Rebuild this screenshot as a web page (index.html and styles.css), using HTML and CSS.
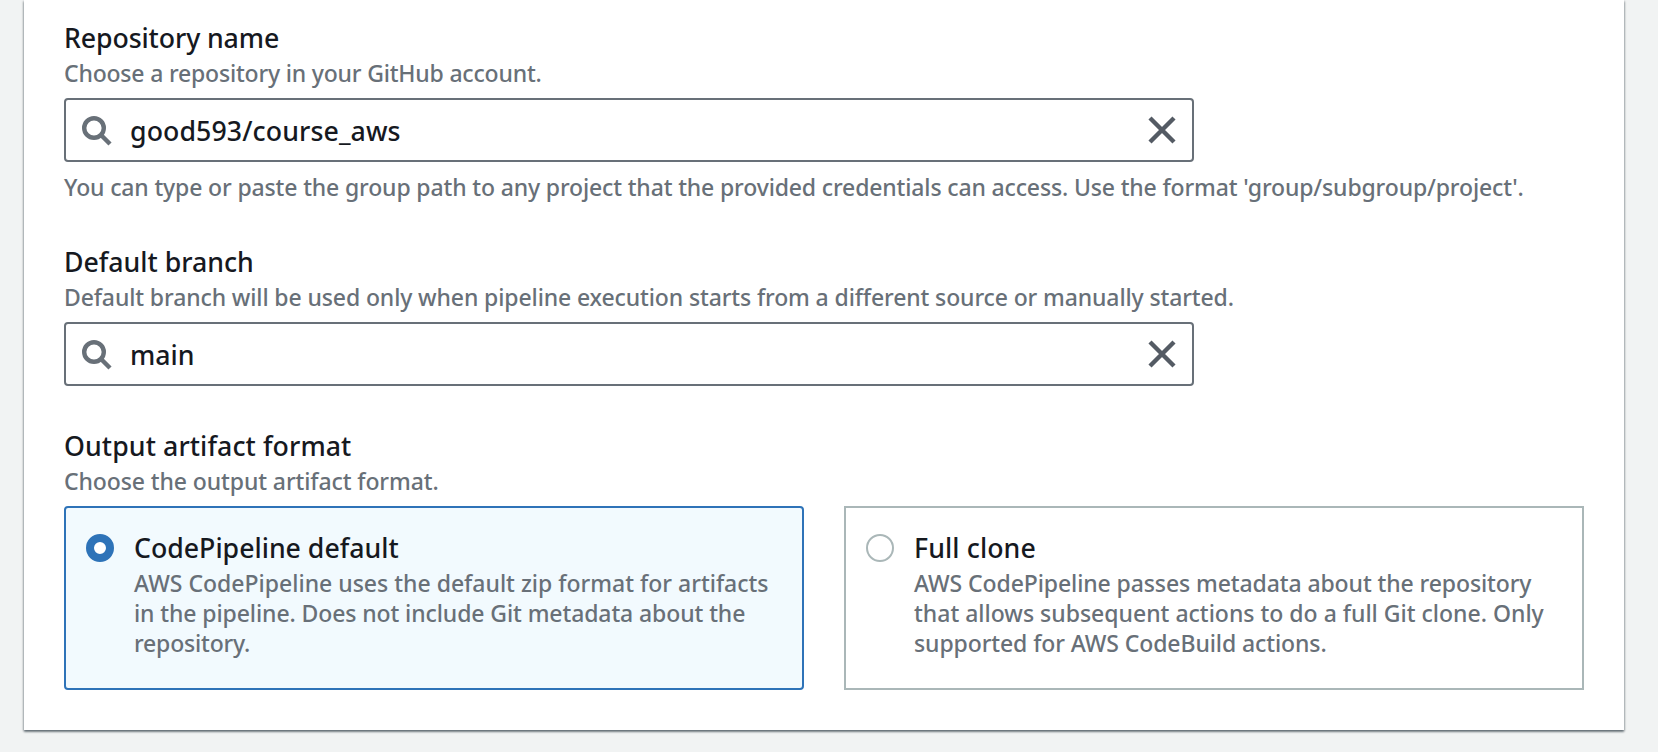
FILE: index.html
```
<!DOCTYPE html>
<html lang="en">
<head>
  <meta charset="utf-8">
  <title>Add source stage</title>
  <link rel="stylesheet" href="styles.css">
</head>
<body>
  <main class="panel">
    <section class="field">
      <h2 class="title snug">Repository name</h2>
      <p class="description tight">Choose a repository in your GitHub account.</p>
      <div class="search">
        <svg class="search-icon" viewBox="0 0 32 32" aria-hidden="true"><circle cx="14" cy="14" r="9.8"/><path d="M20.5 20.5 30 30"/></svg>
        <span class="value loose">good593/course_aws</span>
        <svg class="clear-icon" viewBox="0 0 32 32" aria-hidden="true"><path d="M4 4 28 28M28 4 4 28"/></svg>
      </div>
      <p class="description hint">You can type or paste the group path to any project that the provided credentials can access. Use the format 'group/subgroup/project'.</p>
    </section>

    <section class="field">
      <h2 class="title">Default branch</h2>
      <p class="description branch-note">Default branch will be used only when pipeline execution starts from a different source or manually started.</p>
      <div class="search">
        <svg class="search-icon" viewBox="0 0 32 32" aria-hidden="true"><circle cx="14" cy="14" r="9.8"/><path d="M20.5 20.5 30 30"/></svg>
        <span class="value">main</span>
        <svg class="clear-icon" viewBox="0 0 32 32" aria-hidden="true"><path d="M4 4 28 28M28 4 4 28"/></svg>
      </div>
    </section>

    <section class="field">
      <h2 class="title loose">Output artifact format</h2>
      <p class="description snug">Choose the output artifact format.</p>
      <div class="tiles">
        <div class="tile selected">
          <span class="radio"></span>
          <div>
            <h3 class="title">CodePipeline default</h3>
            <p class="description"><span>AWS CodePipeline uses the default zip format for artifacts</span><br><span class="snug">in the pipeline. Does not include Git metadata about the</span><br><span class="tight">repository.</span></p>
          </div>
        </div>
        <div class="tile">
          <span class="radio"></span>
          <div>
            <h3 class="title loose">Full clone</h3>
            <p class="description"><span class="snug">AWS CodePipeline passes metadata about the repository</span><br><span>that allows subsequent actions to do a full Git clone. Only</span><br><span class="snug">supported for AWS CodeBuild actions.</span></p>
          </div>
        </div>
      </div>
    </section>
  </main>
</body>
</html>
```
FILE: styles.css
```
* {
  box-sizing: border-box;
}

body {
  margin: 0;
  height: 752px;
  overflow: hidden;
  background: #f1f3f3;
  color: #16191f;
  font-family: "Noto Sans", sans-serif;
  font-weight: 500;
}

.panel {
  width: 1600px;
  height: 730px;
  margin-left: 24px;
  padding: 17px 40px 0;
  display: flex;
  flex-direction: column;
  gap: 39px;
  background: #fff;
  box-shadow: 0 2px 2px rgba(0, 20, 30, 0.42), 1px 1px 2px rgba(0, 20, 30, 0.2), -1px 1px 2px rgba(0, 20, 30, 0.2);
}

.title {
  margin: 0;
  font-size: 26.7px;
  font-weight: 500;
  line-height: 42px;
  white-space: nowrap;
}

.description {
  margin: -1px 0 0;
  color: #687078;
  font-size: 23px;
  line-height: 30px;
  white-space: nowrap;
}

.loose {
  letter-spacing: 0.1px;
}

.snug {
  letter-spacing: -0.1px;
}

.tight {
  letter-spacing: -0.19px;
}

.branch-note {
  letter-spacing: -0.12px;
}

.hint {
  margin-top: 10px;
  letter-spacing: -0.145px;
}

.search {
  width: 1130px;
  height: 64px;
  margin-top: 10px;
  padding: 0 14px;
  display: flex;
  align-items: center;
  border: 2px solid #687078;
  border-radius: 4px;
}

.search-icon,
.clear-icon {
  width: 32px;
  height: 32px;
  fill: none;
  stroke: #687078;
  stroke-width: 4.4;
}

.clear-icon {
  stroke: #545b64;
}

.value {
  flex: 1;
  margin-left: 18px;
  padding-top: 2px;
  font-size: 26.7px;
  line-height: 42px;
}

.tiles {
  margin-top: 10px;
  display: grid;
  grid-template-columns: 1fr 1fr;
  gap: 40px;
}

.tile {
  height: 184px;
  padding: 19px 18px;
  display: flex;
  gap: 20px;
  border: 2px solid #aab7b8;
}

.selected {
  background: #f2fafe;
  border-color: #2e73b8;
  border-radius: 4px;
}

.radio {
  flex: none;
  width: 28px;
  height: 28px;
  margin: 7px 0 0 2px;
  border: 2px solid #aab7b8;
  border-radius: 50%;
  background: #fff;
}

.selected .radio {
  border: 8px solid #2e73b8;
}
```
